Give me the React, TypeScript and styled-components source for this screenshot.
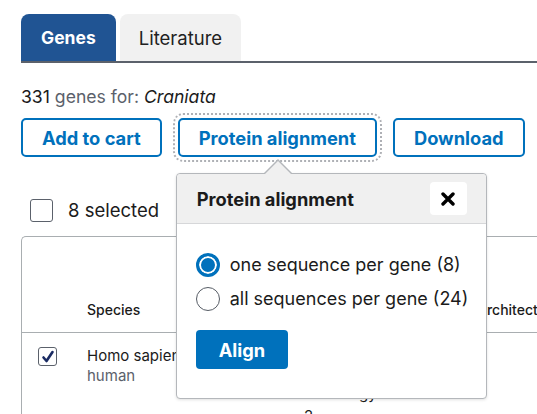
import styled, { createGlobalStyle } from 'styled-components'

const GlobalStyle = createGlobalStyle`
  html, body {
    margin: 0;
    padding: 0;
    background: #fff;
    overflow: hidden;
  }
  body {
    font-family: 'Inter', 'Liberation Sans', Arial, sans-serif;
    color: #1b1b1b;
  }
`

const Page = styled.div`
  width: 720px;
  padding: 14px 0 0 21px;
`

const TabBar = styled.div`
  display: flex;
  gap: 4px;
  border-bottom: 2px solid #5b616b;
`

const Tab = styled.div<{ $active?: boolean }>`
  height: 47px;
  display: flex;
  align-items: center;
  padding: 0 ${(p) => (p.$active ? '20px' : '19px')};
  border-radius: 8px 8px 0 0;
  font-size: ${(p) => (p.$active ? '17.5px' : '18.5px')};
  font-weight: ${(p) => (p.$active ? 700 : 400)};
  background: ${(p) => (p.$active ? '#205493' : '#f1f1f1')};
  color: ${(p) => (p.$active ? '#fff' : '#212121')};
`

const Summary = styled.p`
  margin: 23px 0 0;
  font-size: 17.6px;
  line-height: 22px;
  color: #1b1b1b;

  .muted {
    color: #5b616b;
  }

  em {
    font-style: italic;
  }
`

const ButtonRow = styled.div`
  display: flex;
  gap: 16px;
  margin-top: 10px;
`

const ButtonWrap = styled.div`
  position: relative;
`

const OutlineButton = styled.button<{ $focused?: boolean }>`
  height: 39px;
  padding: 0 19px;
  border: 2px solid #0071bc;
  border-radius: 5px;
  background: #fff;
  color: #0071bc;
  font-family: inherit;
  font-size: 18.3px;
  font-weight: 700;
  white-space: nowrap;
  outline: ${(p) => (p.$focused ? '2px dotted #aeb0b5' : 'none')};
  outline-offset: 3px;
`

const Popover = styled.div`
  position: absolute;
  top: 55px;
  left: -2px;
  width: 309px;
  border: 1px solid #b4b7bb;
  border-radius: 4px;
  background: #fff;
  box-shadow: 0 1px 3px rgba(0, 0, 0, 0.12);
  z-index: 10;

  &::before,
  &::after {
    content: '';
    position: absolute;
    left: 86px;
    width: 0;
    height: 0;
    border-left: 15px solid transparent;
    border-right: 15px solid transparent;
  }
  &::before {
    top: -15px;
    border-bottom: 15px solid #b4b7bb;
  }
  &::after {
    top: -13px;
    left: 87px;
    border-left-width: 14px;
    border-right-width: 14px;
    border-bottom: 14px solid #f0f0f0;
  }
`

const PopoverHeader = styled.div`
  height: 49px;
  display: flex;
  align-items: center;
  justify-content: space-between;
  padding: 0 19px 0 20px;
  background: #f0f0f0;
  border-bottom: 1px solid #d6d7d9;
  border-radius: 4px 4px 0 0;
`

const PopoverTitle = styled.span`
  font-size: 18.3px;
  font-weight: 700;
  color: #1b1b1b;
`

const CloseButton = styled.button`
  width: 37px;
  height: 33px;
  display: flex;
  align-items: center;
  justify-content: center;
  border: none;
  border-radius: 4px;
  background: #fff;
  padding: 0;
`

const PopoverBody = styled.div`
  padding: 29px 20px 29px 19px;
`

const RadioList = styled.div`
  display: flex;
  flex-direction: column;
  gap: 10px;
`

const RadioRow = styled.label`
  display: flex;
  align-items: center;
  gap: 10px;
  font-size: 18px;
  line-height: 24px;
  white-space: nowrap;
  color: #1b1b1b;
`

const RadioDot = styled.span<{ $checked?: boolean }>`
  box-sizing: border-box;
  flex: none;
  width: 24px;
  height: 24px;
  border-radius: 50%;
  background: ${(p) => (p.$checked ? '#0071bc' : '#fff')};
  border: ${(p) => (p.$checked ? '3px solid #0071bc' : '1px solid #565c65')};
  box-shadow: ${(p) => (p.$checked ? 'inset 0 0 0 2px #fff' : 'none')};
`

const PrimaryButton = styled.button`
  margin-top: 19px;
  height: 39px;
  padding: 0 23px;
  border: none;
  border-radius: 4px;
  background: #0071bc;
  color: #fff;
  font-family: inherit;
  font-size: 18.3px;
  font-weight: 700;
`

const SelectedRow = styled.div`
  display: flex;
  align-items: center;
  gap: 15px;
  margin-top: 42px;
  padding-left: 9px;
  font-size: 18.5px;
  line-height: 23px;
  color: #1b1b1b;
`

const CheckBox = styled.span<{ $size: number }>`
  box-sizing: border-box;
  width: ${(p) => p.$size}px;
  height: ${(p) => p.$size}px;
  margin-top: ${(p) => (p.$size < 20 ? 1 : 0)}px;
  border: 1px solid #5b616b;
  border-radius: 3px;
  background: #fff;
  display: flex;
  align-items: center;
  justify-content: center;
`

const Table = styled.table`
  margin-top: 14px;
  border-collapse: separate;
  border-spacing: 0;
  border: 1px solid #a9aeb1;
  border-right: none;
  border-radius: 5px 0 0 0;
  width: 700px;
  table-layout: fixed;
`

const HeadCell = styled.th<{ $w: number }>`
  width: ${(p) => p.$w}px;
  height: 96px;
  box-sizing: border-box;
  vertical-align: bottom;
  text-align: left;
  padding: 0 10px 12px;
  font-size: 14px;
  line-height: 20px;
  font-weight: 500;
  color: #1b1b1b;
  border-bottom: 1px solid #a9aeb1;
  white-space: nowrap;
  overflow: hidden;
`

const Cell = styled.td<{ $pl?: number; $lh?: number }>`
  vertical-align: top;
  padding: 13px 10px 0 ${(p) => p.$pl ?? 10}px;
  font-size: 15px;
  line-height: ${(p) => p.$lh ?? 20}px;
  color: #1b1b1b;
  height: 80px;
  white-space: nowrap;
  overflow: hidden;

  .sub {
    color: #5b616b;
  }
`

function CloseIcon() {
  return (
    <svg width="14" height="14" viewBox="0 0 14 14">
      <path d="M2 2 L12 12 M12 2 L2 12" stroke="#000" strokeWidth="3.4" strokeLinecap="round" />
    </svg>
  )
}

function CheckMark() {
  return (
    <svg width="14" height="14" viewBox="0 0 14 14">
      <path d="M2.5 7.5 L5.5 11 L11.5 2" fill="none" stroke="#1a2b63" strokeWidth="2.6" strokeLinecap="round" strokeLinejoin="round" />
    </svg>
  )
}

export default function App() {
  return (
    <>
      <GlobalStyle />
      <Page>
        <TabBar>
          <Tab $active>Genes</Tab>
          <Tab>Literature</Tab>
        </TabBar>
        <Summary>
          331 <span className="muted">genes for:</span> <em>Craniata</em>
        </Summary>
        <ButtonRow>
          <OutlineButton>Add to cart</OutlineButton>
          <ButtonWrap>
            <OutlineButton $focused>Protein alignment</OutlineButton>
            <Popover>
              <PopoverHeader>
                <PopoverTitle>Protein alignment</PopoverTitle>
                <CloseButton aria-label="Close">
                  <CloseIcon />
                </CloseButton>
              </PopoverHeader>
              <PopoverBody>
                <RadioList>
                  <RadioRow>
                    <RadioDot $checked />
                    one sequence per gene (8)
                  </RadioRow>
                  <RadioRow>
                    <RadioDot />
                    all sequences per gene (24)
                  </RadioRow>
                </RadioList>
                <PrimaryButton>Align</PrimaryButton>
              </PopoverBody>
            </Popover>
          </ButtonWrap>
          <OutlineButton>Download</OutlineButton>
        </ButtonRow>
        <SelectedRow>
          <CheckBox $size={23} />8 selected
        </SelectedRow>
        <Table>
          <thead>
            <tr>
              <HeadCell $w={55} />
              <HeadCell $w={217}>Species</HeadCell>
              <HeadCell $w={55}>Gene</HeadCell>
              <HeadCell $w={118}>Description</HeadCell>
              <HeadCell $w={255}>Architecture</HeadCell>
            </tr>
          </thead>
          <tbody>
            <tr>
              <Cell $pl={16}>
                <CheckBox $size={19}>
                  <CheckMark />
                </CheckBox>
              </Cell>
              <Cell>
                Homo sapiens
                <div className="sub">human</div>
              </Cell>
              <Cell>
                CYP
                <br />
                <br />
                <br />2
              </Cell>
              <Cell $lh={19}>
                cytochrome
                <br />
                P450 family
                <br />
                gy
              </Cell>
              <Cell />
            </tr>
          </tbody>
        </Table>
      </Page>
    </>
  )
}
